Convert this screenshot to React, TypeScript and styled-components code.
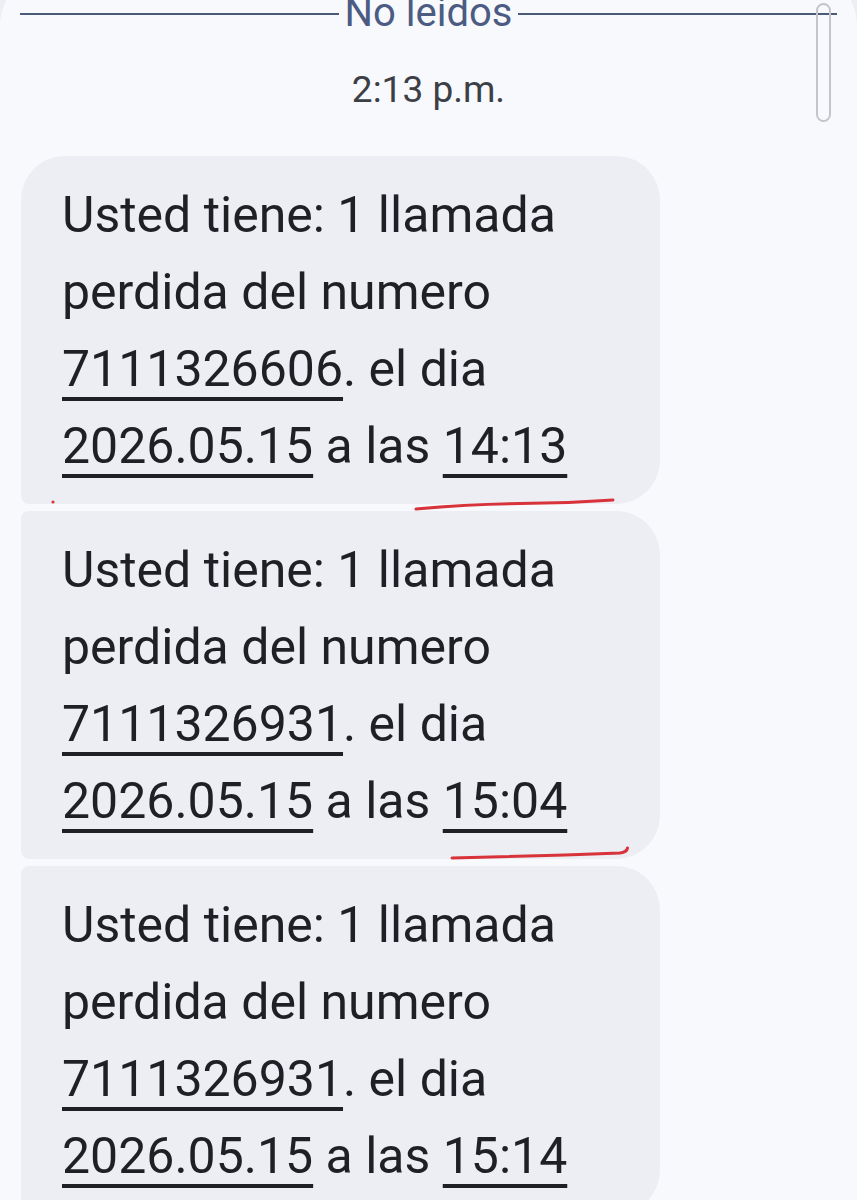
import styled, { createGlobalStyle } from "styled-components";

const GlobalStyle = createGlobalStyle`
  html, body {
    margin: 0;
    padding: 0;
    background: #eceef3;
    overflow: hidden;
  }

  body {
    font-family: "Roboto", "Noto Sans", sans-serif;
  }
`;

const Panel = styled.main`
  position: relative;
  margin-top: -30px;
  padding-top: 19px;
  min-height: 1250px;
  background: #f8f9fd;
  border-radius: 56px 56px 0 0;
`;

const UnreadDivider = styled.div`
  display: flex;
  align-items: center;
  padding: 0 20px;
  height: 48px;
`;

const DividerLine = styled.div`
  flex: 1;
  height: 2px;
  margin-top: 2px;
  background: #4a5a78;
`;

const DividerLabel = styled.span`
  margin: 0 6px;
  font-size: 40px;
  line-height: 48px;
  color: #4b5b82;
`;

const Timestamp = styled.div`
  margin-top: 28px;
  text-align: center;
  font-size: 37px;
  line-height: 50px;
  color: #3c3f46;
`;

const MessageList = styled.section`
  display: flex;
  flex-direction: column;
  gap: 7px;
  margin-top: 41px;
  padding-left: 21px;
`;

const Bubble = styled.div<{ $first?: boolean }>`
  width: 639px;
  box-sizing: border-box;
  padding: 21px 40px 19px 41px;
  background: #eceef4;
  border-radius: ${(p) => (p.$first ? "44px" : "8px")} 44px 44px 8px;
  font-size: 50px;
  line-height: 77px;
  color: #1e2025;
`;

const Link = styled.span`
  text-decoration: underline;
  text-decoration-thickness: 4px;
  text-underline-offset: 11px;
`;

const Scrollbar = styled.div`
  position: absolute;
  top: 33px;
  right: 26px;
  width: 11px;
  height: 115px;
  border: 2px solid #c3c5cb;
  border-radius: 8px;
`;

const InkLayer = styled.svg`
  position: absolute;
  left: 0;
  top: 30px;
  pointer-events: none;
`;

const messages = [
  { number: "7111326606", date: "2026.05.15", time: "14:13" },
  { number: "7111326931", date: "2026.05.15", time: "15:04" },
  { number: "7111326931", date: "2026.05.15", time: "15:14" },
];

export default function App() {
  return (
    <>
      <GlobalStyle />
      <Panel>
        <UnreadDivider>
          <DividerLine />
          <DividerLabel>No leidos</DividerLabel>
          <DividerLine />
        </UnreadDivider>
        <Timestamp>2:13 p.m.</Timestamp>
        <MessageList>
          {messages.map((m, idx) => (
            <Bubble key={`msg-${idx}`} $first={idx === 0}>
              Usted tiene: 1 llamada perdida del numero{" "}
              <Link>{m.number}</Link>. el dia <Link>{m.date}</Link> a las{" "}
              <Link>{m.time}</Link>
            </Bubble>
          ))}
        </MessageList>
        <Scrollbar />
        <InkLayer width="857" height="1200" viewBox="0 0 857 1200">
          <g fill="none" stroke="#d8323a" strokeWidth="3" strokeLinecap="round">
            <path d="M416 509 Q 470 504 520 503.5 T 613 500" />
            <path d="M452 858 Q 540 856 620 853 Q 627 852 627.5 848" />
          </g>
          <circle cx="53" cy="502" r="1.6" fill="#d8323a" />
        </InkLayer>
      </Panel>
    </>
  );
}
